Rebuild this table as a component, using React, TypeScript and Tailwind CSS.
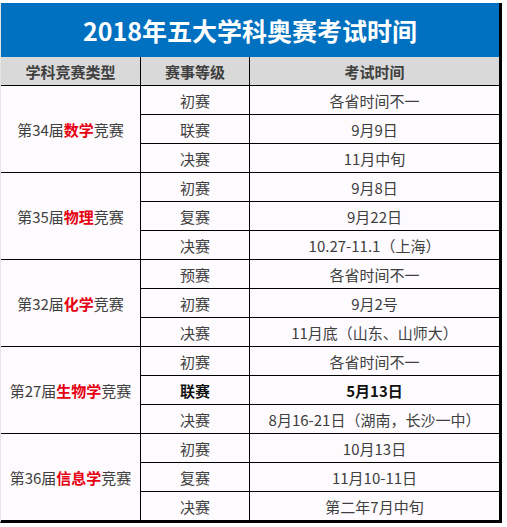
import React from "react";

type Group = {
  pre: string;
  red: string;
  rows: { level: string; time: string; bold?: boolean }[];
};

const groups: Group[] = [
  {
    pre: "第34届",
    red: "数学",
    rows: [
      { level: "初赛", time: "各省时间不一" },
      { level: "联赛", time: "9月9日" },
      { level: "决赛", time: "11月中旬" },
    ],
  },
  {
    pre: "第35届",
    red: "物理",
    rows: [
      { level: "初赛", time: "9月8日" },
      { level: "复赛", time: "9月22日" },
      { level: "决赛", time: "10.27-11.1（上海）" },
    ],
  },
  {
    pre: "第32届",
    red: "化学",
    rows: [
      { level: "预赛", time: "各省时间不一" },
      { level: "初赛", time: "9月2号" },
      { level: "决赛", time: "11月底（山东、山师大）" },
    ],
  },
  {
    pre: "第27届",
    red: "生物学",
    rows: [
      { level: "初赛", time: "各省时间不一" },
      { level: "联赛", time: "5月13日", bold: true },
      { level: "决赛", time: "8月16-21日（湖南，长沙一中）" },
    ],
  },
  {
    pre: "第36届",
    red: "信息学",
    rows: [
      { level: "初赛", time: "10月13日" },
      { level: "复赛", time: "11月10-11日" },
      { level: "决赛", time: "第二年7月中旬" },
    ],
  },
];

const font = { fontFamily: '"Noto Sans CJK SC", "Noto Sans", sans-serif' };

export default function App() {
  return (
    <div className="h-[527px] w-[507px] bg-white pt-[3px]" style={font}>
      <div className="w-[502px] border-l border-r-[3px] border-b-2 border-l-[#e4e4e4] border-r-black border-b-black">
        <div className="flex h-[54px] items-center justify-center bg-[#0070c0] text-[25px] font-bold leading-none text-white">
          2018年五大学科奥赛考试时间
        </div>
        <div className="grid grid-cols-[140px_109px_249px] bg-[#fdfbfd] text-[15px] leading-none text-[#404040]">
          <div className="flex h-[29px] items-center justify-center border-r border-b border-black bg-[#d9d9d9] font-bold">
            学科竞赛类型
          </div>
          <div className="flex h-[29px] items-center justify-center border-r border-b border-black bg-[#d9d9d9] font-bold">
            赛事等级
          </div>
          <div className="flex h-[29px] items-center justify-center border-b border-black bg-[#d9d9d9] font-bold">
            考试时间
          </div>
          {groups.map((g) => (
            <React.Fragment key={g.pre}>
              <div className="row-span-3 flex items-center justify-center border-r border-b border-black">
                {g.pre}
                <span className="font-bold text-[#e60012]">{g.red}</span>
                竞赛
              </div>
              {g.rows.map((r, i) => (
                <React.Fragment key={i}>
                  <div
                    className={`flex h-[29px] items-center justify-center border-r border-b border-black ${
                      r.bold ? "font-bold text-[#111]" : ""
                    }`}
                  >
                    {r.level}
                  </div>
                  <div
                    className={`flex h-[29px] items-center justify-center border-b border-black ${
                      r.bold ? "font-bold text-[#111]" : ""
                    }`}
                  >
                    {r.time}
                  </div>
                </React.Fragment>
              ))}
            </React.Fragment>
          ))}
        </div>
      </div>
    </div>
  );
}
